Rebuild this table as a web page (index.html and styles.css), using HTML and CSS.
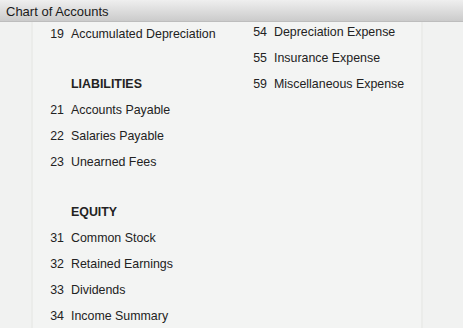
FILE: index.html
```html
<!DOCTYPE html>
<html>
<head>
<meta charset="utf-8">
<link rel="stylesheet" href="styles.css">
</head>
<body>
<div class="header">Chart of Accounts</div>
<div class="main">
  <div class="panel">
    <div class="col col-left">
      <div class="row"><span class="num">19</span><span class="name">Accumulated Depreciation</span></div>
      <div class="spacer"></div>
      <div class="row heading"><span class="num"></span><span class="name">LIABILITIES</span></div>
      <div class="row"><span class="num">21</span><span class="name">Accounts Payable</span></div>
      <div class="row"><span class="num">22</span><span class="name">Salaries Payable</span></div>
      <div class="row"><span class="num">23</span><span class="name">Unearned Fees</span></div>
      <div class="spacer"></div>
      <div class="row heading"><span class="num"></span><span class="name">EQUITY</span></div>
      <div class="row"><span class="num">31</span><span class="name">Common Stock</span></div>
      <div class="row"><span class="num">32</span><span class="name">Retained Earnings</span></div>
      <div class="row"><span class="num">33</span><span class="name">Dividends</span></div>
      <div class="row"><span class="num">34</span><span class="name">Income Summary</span></div>
    </div>
    <div class="col col-right">
      <div class="row"><span class="num">54</span><span class="name">Depreciation Expense</span></div>
      <div class="row"><span class="num">55</span><span class="name">Insurance Expense</span></div>
      <div class="row"><span class="num">59</span><span class="name">Miscellaneous Expense</span></div>
    </div>
  </div>
</div>
</body>
</html>
```
FILE: styles.css
```css
html, body {
  margin: 0;
  padding: 0;
  height: 100%;
  overflow: hidden;
  background: #f1f2f1;
  font-family: "Liberation Sans", Arial, sans-serif;
  color: #222;
}
.header {
  height: 22px;
  line-height: 23px;
  padding-left: 6px;
  font-size: 13px;
  color: #1a1a1a;
  background: linear-gradient(#efefef, #cbcbcb);
  border-bottom: 1px solid #bdbdbd;
  box-sizing: border-box;
}
.main {
  height: 306px;
  overflow: hidden;
}
.panel {
  margin-left: 31px;
  width: 392px;
  height: 100%;
  box-sizing: border-box;
  background: #f3f4f3;
  border-left: 2px solid #ebecea;
  border-right: 2px solid #ebecea;
  display: flex;
}
.col-left {
  width: 203px;
  margin-top: -1px;
}
.col-right {
  margin-top: -3px;
}
.row {
  height: 26px;
  display: flex;
  align-items: center;
  font-size: 12.4px;
}
.num {
  width: 31px;
  text-align: right;
  margin-right: 7px;
}
.heading .name {
  font-weight: bold;
}
.spacer {
  height: 24px;
}
```
